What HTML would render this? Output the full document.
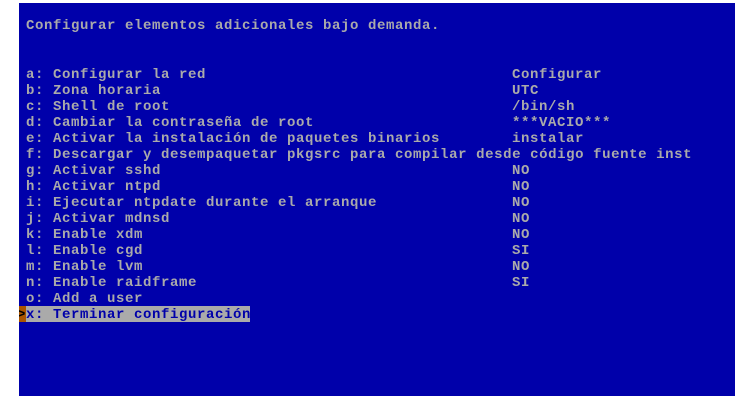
<!DOCTYPE html>
<html><head><meta charset="utf-8"><style>
html,body{margin:0;padding:0;background:#fff;width:755px;height:400px;overflow:hidden}
#s{position:absolute;left:19px;top:3px;width:716px;height:393px;background:#0000AA}
.r{position:absolute;height:16px;line-height:18px;font-family:"Liberation Mono",monospace;font-size:14px;font-weight:bold;letter-spacing:0.6px;color:#AAAAAA;white-space:pre;overflow:hidden}
.hl{background:#AAAAAA;color:#0000AA}
.ar{background:#AA5500;color:#000}
</style></head><body>
<div id="s"></div>
<div class="r" style="left:26px;top:17px">Configurar elementos adicionales bajo demanda.</div>
<div class="r" style="left:26px;top:66px">a: Configurar la red</div><div class="r" style="left:512px;top:66px">Configurar</div>
<div class="r" style="left:26px;top:82px">b: Zona horaria</div><div class="r" style="left:512px;top:82px">UTC</div>
<div class="r" style="left:26px;top:98px">c: Shell de root</div><div class="r" style="left:512px;top:98px">/bin/sh</div>
<div class="r" style="left:26px;top:114px">d: Cambiar la contraseña de root</div><div class="r" style="left:512px;top:114px">***VACIO***</div>
<div class="r" style="left:26px;top:130px">e: Activar la instalación de paquetes binarios</div><div class="r" style="left:512px;top:130px">instalar</div>
<div class="r" style="left:26px;top:146px">f: Descargar y desempaquetar pkgsrc para compilar desde código fuente inst</div>
<div class="r" style="left:26px;top:162px">g: Activar sshd</div><div class="r" style="left:512px;top:162px">NO</div>
<div class="r" style="left:26px;top:178px">h: Activar ntpd</div><div class="r" style="left:512px;top:178px">NO</div>
<div class="r" style="left:26px;top:194px">i: Ejecutar ntpdate durante el arranque</div><div class="r" style="left:512px;top:194px">NO</div>
<div class="r" style="left:26px;top:210px">j: Activar mdnsd</div><div class="r" style="left:512px;top:210px">NO</div>
<div class="r" style="left:26px;top:226px">k: Enable xdm</div><div class="r" style="left:512px;top:226px">NO</div>
<div class="r" style="left:26px;top:242px">l: Enable cgd</div><div class="r" style="left:512px;top:242px">SI</div>
<div class="r" style="left:26px;top:258px">m: Enable lvm</div><div class="r" style="left:512px;top:258px">NO</div>
<div class="r" style="left:26px;top:274px">n: Enable raidframe</div><div class="r" style="left:512px;top:274px">SI</div>
<div class="r" style="left:26px;top:290px">o: Add a user</div>
<div class="r ar" style="left:19px;top:306px;width:7px;text-indent:-2px">&gt;</div>
<div class="r hl" style="left:26px;top:306px;width:224px">x: Terminar configuración</div>
</body></html>
